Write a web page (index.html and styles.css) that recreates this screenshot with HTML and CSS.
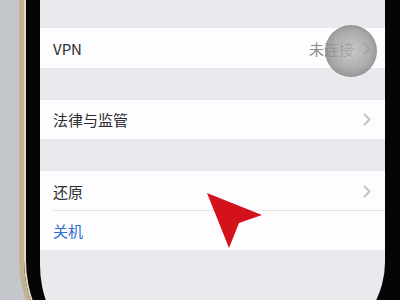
FILE: index.html
```html
<!DOCTYPE html>
<html lang="zh-CN">
<head>
<meta charset="utf-8">
<link rel="stylesheet" href="styles.css">
</head>
<body>
<div class="phone">
  <div class="screen">
    <div class="gap top"></div>
    <div class="group">
      <div class="row tall">
        <span class="label">VPN</span>
        <span class="value">未连接</span>
        <svg class="chev" width="8" height="13" viewBox="0 0 8 13"><polyline points="1.5,1.5 6.5,6.5 1.5,11.5" fill="none" stroke="#c2c2c6" stroke-width="2" stroke-linecap="round" stroke-linejoin="round"/></svg>
      </div>
    </div>
    <div class="gap"></div>
    <div class="group">
      <div class="row">
        <span class="label">法律与监管</span>
        <svg class="chev" width="8" height="13" viewBox="0 0 8 13"><polyline points="1.5,1.5 6.5,6.5 1.5,11.5" fill="none" stroke="#c2c2c6" stroke-width="2" stroke-linecap="round" stroke-linejoin="round"/></svg>
      </div>
    </div>
    <div class="gap"></div>
    <div class="group">
      <div class="row tall sep">
        <span class="label">还原</span>
        <svg class="chev" width="8" height="13" viewBox="0 0 8 13"><polyline points="1.5,1.5 6.5,6.5 1.5,11.5" fill="none" stroke="#c2c2c6" stroke-width="2" stroke-linecap="round" stroke-linejoin="round"/></svg>
      </div>
      <div class="row">
        <span class="label blue">关机</span>
      </div>
    </div>
  </div>
</div>
<div class="touch"></div>
<svg class="cursor" width="400" height="300" viewBox="0 0 400 300">
  <polygon points="207,193 262,215 239,223 229,248" fill="#d3121c"/>
</svg>
</body>
</html>
```

FILE: styles.css
```css
html, body {
  margin: 0;
  padding: 0;
}
body {
  width: 400px;
  height: 300px;
  overflow: hidden;
  position: relative;
  background: linear-gradient(90deg, #c3c6ca, #cdd0d4);
  font-family: "Noto Sans CJK SC", "Noto Sans", sans-serif;
}
.phone {
  margin-left: 19px;
  width: 400px;
  height: 380px;
  box-sizing: border-box;
  border-left: 5px solid #c4b392;
  background: #050505;
  border-radius: 0 0 0 120px;
  padding-left: 16px;
  box-shadow: inset 2px 0 0 #e4d9c2;
}
.screen {
  width: 345px;
  height: 375px;
  background: #e9eaee;
  border-radius: 0 0 150px 110px / 0 0 113px 110px;
  overflow: hidden;
}
.gap {
  height: 32px;
}
.gap.top {
  height: 28px;
}
.group {
  background: #fdfdff;
}
.row {
  height: 39px;
  display: flex;
  align-items: center;
  padding: 0 14px 0 13px;
  font-size: 15px;
  color: #2c2c2e;
  position: relative;
}
.row.tall {
  height: 40px;
}
.row.sep::after {
  content: "";
  position: absolute;
  left: 13px;
  right: 0;
  bottom: 0;
  height: 1px;
  background: #e4e4e8;
}
.label {
  flex: 1;
}
.value {
  color: #8b8b8f;
  margin-right: 9px;
}
.blue {
  color: #2b6fd0;
}
.chev {
  display: block;
}
.touch {
  position: absolute;
  left: 325px;
  top: 25px;
  width: 52px;
  height: 52px;
  border-radius: 50%;
  background: radial-gradient(circle at 50% 50%, rgba(180,180,180,0.7) 0%, rgba(150,150,150,0.8) 55%, rgba(105,105,105,0.9) 100%);
}
.cursor {
  position: absolute;
  left: 0;
  top: 0;
}
```
